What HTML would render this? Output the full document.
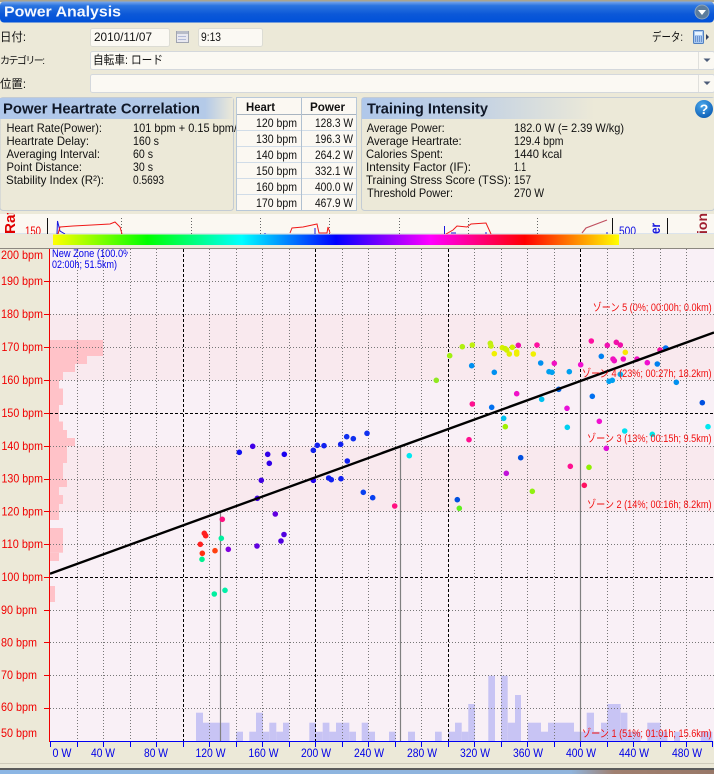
<!DOCTYPE html>
<html lang="ja">
<head>
<meta charset="utf-8">
<title>Power Analysis</title>
<style>
html,body{margin:0;padding:0;background:#ece9d8;width:714px;height:774px;overflow:hidden}
svg{display:block}
text{font-family:"Liberation Sans","Noto Sans CJK JP",sans-serif;font-size:12px;fill:#111}
.h{font-size:15px;font-weight:bold;fill:#101828}
.r text,.r{fill:#f00000}
.b text{fill:#0000e8}
.z text{fill:#f01010;font-size:11px}
.p circle{r:2.8px}
</style>
</head>
<body>
<svg xmlns="http://www.w3.org/2000/svg" width="714" height="774" viewBox="0 0 714 774">
<defs>
<linearGradient id="tb" x1="0" y1="0" x2="0" y2="1"><stop offset="0" stop-color="#7aa8ec"/><stop offset=".2" stop-color="#2a74e0"/><stop offset=".6" stop-color="#0c58d8"/><stop offset="1" stop-color="#0050d8"/></linearGradient>
<linearGradient id="hl"><stop offset="0" stop-color="#b0c8ea"/><stop offset=".88" stop-color="#b4cae8"/><stop offset="1" stop-color="#ece9d8"/></linearGradient>
<linearGradient id="hr"><stop offset="0" stop-color="#b0c8ea"/><stop offset=".3" stop-color="#c0d0e4"/><stop offset=".66" stop-color="#ece9d8"/><stop offset="1" stop-color="#ece9d8"/></linearGradient>
<linearGradient id="cb"><stop offset="0" stop-color="#ffff00"/><stop offset=".1667" stop-color="#00ff00"/><stop offset=".3333" stop-color="#00ffff"/><stop offset=".5" stop-color="#0000ff"/><stop offset=".6667" stop-color="#ff00ff"/><stop offset=".8333" stop-color="#ff0000"/><stop offset="1" stop-color="#ffff00"/></linearGradient>
<linearGradient id="bt"><stop offset="0" stop-color="#8cb6e4"/><stop offset=".8" stop-color="#90b4dc"/><stop offset=".86" stop-color="#a08070"/><stop offset="1" stop-color="#987868"/></linearGradient>
<radialGradient id="hp" cx=".4" cy=".3" r=".8"><stop offset="0" stop-color="#4aa8ec"/><stop offset="1" stop-color="#0858b0"/></radialGradient>
<clipPath id="cl"><rect x="0" y="97" width="236" height="114"/></clipPath>
<clipPath id="cs"><rect x="0" y="213" width="714" height="21"/></clipPath>
<clipPath id="cz"><rect x="50" y="249" width="78" height="22"/></clipPath>
</defs>

<rect width="714" height="774" fill="#ece9d8"/>

<!-- title bar -->
<rect x="0" y="0" width="714" height="2" fill="#a8a490"/>
<rect x="0" y="1.5" width="714" height="21" rx="4" fill="url(#tb)"/>
<text x="4" y="16.5" textLength="117" lengthAdjust="spacingAndGlyphs" style="font-size:15px;font-weight:bold;fill:#f4f8ff">Power Analysis</text>
<circle cx="702" cy="12" r="7" fill="#5c7c9c" stroke="#8ca4bc" stroke-width="1"/>
<path d="M698 10h8l-4 5z" fill="#fff"/>

<!-- form -->
<text x="0" y="41" textLength="26" lengthAdjust="spacingAndGlyphs">日付:</text>
<text x="0" y="64" textLength="45" lengthAdjust="spacing" style="font-size:10px">カテゴリー:</text>
<text x="0" y="88" textLength="26" lengthAdjust="spacingAndGlyphs">位置:</text>
<rect x="90.5" y="28.5" width="79" height="18" rx="2" fill="#fbf9f3" stroke="#dcdcd4"/>
<text x="94" y="41" textLength="58" lengthAdjust="spacingAndGlyphs">2010/11/07</text>
<rect x="176.5" y="31.5" width="12" height="11" fill="#e8e8f0" stroke="#a0a4b0"/>
<rect x="177" y="31" width="11" height="3" fill="#b8bcc8"/>
<path d="M178.5 36.5h8M178.5 39.5h8" stroke="#7c8cc0" stroke-dasharray="1 1"/>
<rect x="198.5" y="28.5" width="64" height="18" rx="2" fill="#fbf9f3" stroke="#dcdcd4"/>
<text x="201" y="41" textLength="20" lengthAdjust="spacingAndGlyphs">9:13</text>
<text x="652" y="41" textLength="31" lengthAdjust="spacingAndGlyphs">データ:</text>
<rect x="693.5" y="30.5" width="10" height="13" rx="1" fill="#a8c8f0" stroke="#5080c0"/>
<rect x="695" y="32" width="7" height="3" fill="#e8f4ff"/>
<path d="M695 37h7M695 39h7M695 41h7" stroke="#3060b0" stroke-dasharray="1 1"/>
<path d="M706 34l3 3-3 3z" fill="#304060"/>
<rect x="90.5" y="51.5" width="624" height="18" rx="2" fill="#fbf9f3" stroke="#d4d8dc"/>
<rect x="90.5" y="74.5" width="624" height="18" rx="2" fill="#fbf9f3" stroke="#d4d8dc"/>
<text x="93" y="64" textLength="70" lengthAdjust="spacingAndGlyphs">自転車: ロード</text>
<path d="M698.5 52v17M698.5 75v17" stroke="#e0e0dc"/>
<path d="M703.5 58.5h7l-3.5 3.500z" fill="#4c5c78"/>
<path d="M703.5 81.5h7l-3.5 3.500z" fill="#4c5c78"/>

<!-- left panel -->
<rect x="0" y="97.5" width="233.5" height="113" rx="3" fill="#ece9d8" stroke="#c4ccd4"/>
<rect x="0" y="98" width="233" height="21" fill="url(#hl)"/>
<text class="h" x="3" y="113.500" textLength="197" lengthAdjust="spacingAndGlyphs">Power Heartrate Correlation</text>
<g clip-path="url(#cl)">
<text x="6.5" y="132" textLength="95.5" lengthAdjust="spacingAndGlyphs">Heart Rate(Power):</text>
<text x="133" y="132" textLength="104" lengthAdjust="spacingAndGlyphs">101 bpm + 0.15 bpm/</text>
</g>
<text x="6.5" y="145" textLength="82.5" lengthAdjust="spacingAndGlyphs">Heartrate Delay:</text>
<text x="133" y="145" textLength="26" lengthAdjust="spacingAndGlyphs">160 s</text>
<text x="6.5" y="158" textLength="93.5" lengthAdjust="spacingAndGlyphs">Averaging Interval:</text>
<text x="133" y="158" textLength="20" lengthAdjust="spacingAndGlyphs">60 s</text>
<text x="6.5" y="171" textLength="75.5" lengthAdjust="spacingAndGlyphs">Point Distance:</text>
<text x="133" y="171" textLength="20" lengthAdjust="spacingAndGlyphs">30 s</text>
<text x="6" y="184" textLength="98" lengthAdjust="spacingAndGlyphs">Stability Index (R²):</text>
<text x="133" y="184" textLength="31" lengthAdjust="spacingAndGlyphs">0.5693</text>

<!-- table -->
<rect x="236.5" y="97.5" width="120" height="113" fill="#fbf8f2" stroke="#b8c8d8"/>
<path d="M237 130.500h119M237 146.500h119M237 162.500h119M237 178.500h119M237 194.500h119" stroke="#d0dce8"/>
<path d="M237 114.500h119" stroke="#a8b4c0"/>
<path d="M301.5 98v112" stroke="#b0c0d0"/>
<text x="246" y="111" textLength="29" lengthAdjust="spacingAndGlyphs" style="font-weight:bold">Heart</text>
<text x="310" y="111" textLength="35" lengthAdjust="spacingAndGlyphs" style="font-weight:bold">Power</text>
<text x="256" y="127" textLength="41" lengthAdjust="spacingAndGlyphs">120 bpm</text><text x="315" y="127" textLength="38" lengthAdjust="spacingAndGlyphs">128.3 W</text>
<text x="256" y="143" textLength="41" lengthAdjust="spacingAndGlyphs">130 bpm</text><text x="315" y="143" textLength="38" lengthAdjust="spacingAndGlyphs">196.3 W</text>
<text x="256" y="159" textLength="41" lengthAdjust="spacingAndGlyphs">140 bpm</text><text x="315" y="159" textLength="38" lengthAdjust="spacingAndGlyphs">264.2 W</text>
<text x="256" y="175" textLength="41" lengthAdjust="spacingAndGlyphs">150 bpm</text><text x="315" y="175" textLength="38" lengthAdjust="spacingAndGlyphs">332.1 W</text>
<text x="256" y="191" textLength="41" lengthAdjust="spacingAndGlyphs">160 bpm</text><text x="315" y="191" textLength="38" lengthAdjust="spacingAndGlyphs">400.0 W</text>
<text x="256" y="207" textLength="41" lengthAdjust="spacingAndGlyphs">170 bpm</text><text x="315" y="207" textLength="38" lengthAdjust="spacingAndGlyphs">467.9 W</text>

<!-- right panel -->
<rect x="361.5" y="97.5" width="353" height="113" rx="3" fill="#ece9d8" stroke="#c4ccd4"/>
<rect x="362" y="98" width="352" height="21" fill="url(#hr)"/>
<text class="h" x="367" y="113.500" textLength="121" lengthAdjust="spacingAndGlyphs">Training Intensity</text>
<circle cx="704" cy="109" r="9" fill="url(#hp)"/>
<text x="704" y="114" text-anchor="middle" style="font-size:14px;font-weight:bold;fill:#fff">?</text>
<text x="366.7" y="132" textLength="78" lengthAdjust="spacingAndGlyphs">Average Power:</text>
<text x="514" y="132" textLength="110" lengthAdjust="spacingAndGlyphs">182.0 W (= 2.39 W/kg)</text>
<text x="366.7" y="145" textLength="95" lengthAdjust="spacingAndGlyphs">Average Heartrate:</text>
<text x="514" y="145" textLength="49.5" lengthAdjust="spacingAndGlyphs">129.4 bpm</text>
<text x="366" y="158" textLength="77" lengthAdjust="spacingAndGlyphs">Calories Spent:</text>
<text x="514" y="158" textLength="48" lengthAdjust="spacingAndGlyphs">1440 kcal</text>
<text x="366" y="171" textLength="105" lengthAdjust="spacingAndGlyphs">Intensity Factor (IF):</text>
<text x="514" y="171" textLength="12" lengthAdjust="spacingAndGlyphs">1.1</text>
<text x="366" y="184" textLength="145" lengthAdjust="spacingAndGlyphs">Training Stress Score (TSS):</text>
<text x="514" y="184" textLength="17" lengthAdjust="spacingAndGlyphs">157</text>
<text x="367" y="197" textLength="86" lengthAdjust="spacingAndGlyphs">Threshold Power:</text>
<text x="514" y="197" textLength="30" lengthAdjust="spacingAndGlyphs">270 W</text>

<!-- mini chart strip -->
<rect x="0" y="214" width="714" height="19.5" fill="#fbf8f2"/>
<path d="M0 233.500h714" stroke="#dce4ec"/>
<g clip-path="url(#cs)">
<path d="M121.5 218v16M191.5 218v16M260.5 218v16M329.5 218v16M399.5 218v16M468.5 218v16M537.5 218v16" stroke="#666" stroke-dasharray="1 2"/>
<path d="M47.5 218v16M612.5 218v16M667.5 218v16" stroke="#111"/>
<path d="M57 234L57.5 221L60 231L65 234M265 233v2M315 228v6M444.5 226v8M451 233h5M485 233h2M607 232v2" fill="none" stroke="#1818e0"/>
<path d="M58 234L60 227L73 226L92 225L110 224L115 222L120 227L122 234M290 233L292 228L303 227L317 224L319 233L327 233L328 227L330 233M446 234L453 230L457 226L467 227L471 224L486 223L491 234" fill="none" stroke="#f01818"/>
<path d="M582 233L586 228L607 220" fill="none" stroke="#c05060" stroke-width="1.2"/>
<text transform="translate(15 234) rotate(-90)" textLength="33" lengthAdjust="spacingAndGlyphs" style="font-size:15px;font-weight:bold;fill:#e00000">Rate</text>
<text x="25" y="235" textLength="16" lengthAdjust="spacingAndGlyphs" style="fill:#f00000">150</text>
<text x="619" y="235" textLength="17" lengthAdjust="spacingAndGlyphs" style="fill:#1010e0">500</text>
<text transform="translate(660 234) rotate(-90)" textLength="11" lengthAdjust="spacingAndGlyphs" style="font-size:14px;font-weight:bold;fill:#1818e0">er</text>
<text transform="translate(707 234) rotate(-90)" textLength="21" lengthAdjust="spacingAndGlyphs" style="font-size:14px;font-weight:bold;fill:#a02030">ion</text>
</g>
<rect x="53" y="234.5" width="566" height="10.5" fill="url(#cb)"/>

<!-- plot background -->
<rect x="50" y="249" width="664" height="492" fill="#f9f0f6"/>
<rect x="50" y="314" width="664" height="66" fill="#f9e9ee"/>
<rect x="50" y="446" width="664" height="65.5" fill="#f9e9ee"/>
<path d="M0 248.500h714" stroke="#8c8880"/>

<!-- left histogram -->
<g fill="#ffc2c8">
<rect x="50" y="340" width="53" height="16"/>
<rect x="50" y="356" width="37" height="8"/>
<rect x="50" y="364" width="25" height="8"/>
<rect x="50" y="372" width="13" height="8"/>
<rect x="50" y="380" width="9" height="8.5"/>
<rect x="50" y="388.5" width="13" height="16.5"/>
<rect x="50" y="405" width="9" height="16.5"/>
<rect x="50" y="421.5" width="13" height="8.5"/>
<rect x="50" y="430" width="17" height="8"/>
<rect x="50" y="438" width="25" height="8"/>
<rect x="50" y="446" width="17" height="17"/>
<rect x="50" y="463" width="13" height="16"/>
<rect x="50" y="479" width="17" height="8"/>
<rect x="50" y="487" width="9" height="8"/>
<rect x="50" y="495" width="13" height="9"/>
<rect x="50" y="504" width="9" height="16"/>
<rect x="50" y="528" width="13" height="24.7"/>
<rect x="50" y="552.7" width="9" height="8.3"/>
<rect x="50" y="586" width="5" height="16"/>
</g>

<!-- bottom histogram -->
<g fill="#c8c4f4">
<rect x="196" y="712.7" width="7" height="28.3"/>
<rect x="203" y="722.7" width="26.5" height="18.3"/>
<rect x="236" y="731.7" width="7" height="9.3"/>
<rect x="249.3" y="731.7" width="6.7" height="9.3"/>
<rect x="256" y="712.7" width="7" height="28.3"/>
<rect x="263" y="731.7" width="6.3" height="9.3"/>
<rect x="269.3" y="722.7" width="7" height="18.3"/>
<rect x="276.3" y="731.7" width="6.7" height="9.3"/>
<rect x="283" y="722.7" width="6.3" height="18.3"/>
<rect x="309.3" y="722.7" width="6.7" height="18.3"/>
<rect x="316" y="731.7" width="6.7" height="9.3"/>
<rect x="322.7" y="722.7" width="6.7" height="18.3"/>
<rect x="329.3" y="731.7" width="6.7" height="9.3"/>
<rect x="336" y="722.7" width="13.3" height="18.3"/>
<rect x="349.3" y="731.7" width="6.7" height="9.3"/>
<rect x="361.7" y="722.7" width="6.7" height="18.3"/>
<rect x="368.3" y="731.7" width="6.7" height="9.3"/>
<rect x="389" y="731.7" width="6.7" height="9.3"/>
<rect x="408" y="731.7" width="7" height="9.3"/>
<rect x="435" y="731.7" width="6.7" height="9.3"/>
<rect x="448.3" y="731.7" width="6.7" height="9.3"/>
<rect x="455" y="722.7" width="6.7" height="18.3"/>
<rect x="461.7" y="731.7" width="6.7" height="9.3"/>
<rect x="468.3" y="704" width="6.7" height="37"/>
<rect x="488.3" y="675.7" width="6.7" height="65.3"/>
<rect x="501" y="675.7" width="6.7" height="65.3"/>
<rect x="507.7" y="722.7" width="7.3" height="18.3"/>
<rect x="515" y="695" width="6" height="46"/>
<rect x="527.7" y="722.7" width="13.3" height="18.3"/>
<rect x="541" y="731.7" width="7" height="9.3"/>
<rect x="548" y="722.7" width="26" height="18.3"/>
<rect x="574" y="731.7" width="12.7" height="9.3"/>
<rect x="586.7" y="712.7" width="7.3" height="28.3"/>
<rect x="594" y="731.7" width="7" height="9.3"/>
<rect x="601" y="722.7" width="6.3" height="18.3"/>
<rect x="607.3" y="704" width="13.3" height="37"/>
<rect x="620.7" y="712.7" width="6.7" height="28.3"/>
<rect x="627.3" y="731.7" width="13.3" height="9.3"/>
<rect x="647.3" y="722.7" width="13.3" height="18.3"/>
<rect x="660.7" y="731.7" width="6.7" height="9.3"/>
<rect x="674" y="731.7" width="6" height="9.3"/>
<rect x="700.7" y="731.7" width="11.7" height="9.3"/>
</g>

<!-- grid -->
<path d="M50 281.500h664M50 314.500h664M50 347.500h664M50 380.500h664M50 446.500h664M50 479.500h664M50 511.500h664M50 544.500h664M50 610.500h664M50 642.500h664M50 675.500h664M50 708.500h664" stroke="#777" stroke-dasharray="1 2"/>
<path d="M77.500 249v492M103.500 249v492M130.500 249v492M156.500 249v492M209.500 249v492M236.500 249v492M262.500 249v492M289.500 249v492M342.500 249v492M368.500 249v492M395.500 249v492M421.500 249v492M474.500 249v492M501.500 249v492M527.500 249v492M554.500 249v492M607.500 249v492M633.500 249v492M660.500 249v492M686.500 249v492" stroke="#777" stroke-dasharray="1 2"/>
<path d="M183.500 249v492M315.500 249v492M448.500 249v492M580.500 249v492M50 413.500h664M50 577.500h664" stroke="#000" stroke-dasharray="3 2"/>
<path d="M220.500 512v229M400.500 447v294M580.500 381v360" stroke="#808080" stroke-width="1.2"/>

<!-- points -->
<g class="p">
<circle cx="436.3" cy="380.3" r="2.8" fill="#90e820"/>
<circle cx="449.7" cy="355.7" r="2.8" fill="#a0f010"/>
<circle cx="462.3" cy="346.7" r="2.8" fill="#b0f010"/>
<circle cx="472.3" cy="345" r="2.8" fill="#c0f010"/>
<circle cx="490.3" cy="343.3" r="2.8" fill="#c0f010"/>
<circle cx="491" cy="346" r="2.8" fill="#c8f010"/>
<circle cx="494.3" cy="353.7" r="2.8" fill="#f0f000"/>
<circle cx="502.3" cy="347.7" r="2.8" fill="#d8f000"/>
<circle cx="505.3" cy="348.7" r="2.8" fill="#c8f000"/>
<circle cx="506.7" cy="350" r="2.8" fill="#d0f000"/>
<circle cx="509.3" cy="354" r="2.8" fill="#e0f000"/>
<circle cx="512.3" cy="347.3" r="2.8" fill="#d0f000"/>
<circle cx="516.7" cy="352" r="2.8" fill="#f0f000"/>
<circle cx="516.7" cy="354" r="2.8" fill="#f0f000"/>
<circle cx="518.3" cy="345.3" r="2.8" fill="#f010a8"/>
<circle cx="533.3" cy="354" r="2.8" fill="#f0f000"/>
<circle cx="537" cy="345" r="2.8" fill="#ff10a0"/>
<circle cx="471.7" cy="365.7" r="2.8" fill="#0090f0"/>
<circle cx="494.3" cy="372.3" r="2.8" fill="#0090f0"/>
<circle cx="540.7" cy="363" r="2.8" fill="#0090f0"/>
<circle cx="549" cy="371.7" r="2.8" fill="#00a0f0"/>
<circle cx="552" cy="372.3" r="2.8" fill="#00a0f0"/>
<circle cx="569.3" cy="371.7" r="2.8" fill="#00a0f0"/>
<circle cx="554.3" cy="363.3" r="2.8" fill="#f010c0"/>
<circle cx="580.7" cy="364.7" r="2.8" fill="#f010d0"/>
<circle cx="591.3" cy="341" r="2.8" fill="#ff10a0"/>
<circle cx="607.3" cy="345.3" r="2.8" fill="#f010b0"/>
<circle cx="616.3" cy="342.3" r="2.8" fill="#f010a8"/>
<circle cx="620.3" cy="345" r="2.8" fill="#f010a8"/>
<circle cx="625.3" cy="352.3" r="2.8" fill="#f8e800"/>
<circle cx="601.3" cy="356.3" r="2.8" fill="#0080f0"/>
<circle cx="613" cy="359" r="2.8" fill="#f010c0"/>
<circle cx="614.3" cy="360.7" r="2.8" fill="#f010c0"/>
<circle cx="623.3" cy="359" r="2.8" fill="#f010c0"/>
<circle cx="637" cy="359" r="2.8" fill="#f010c0"/>
<circle cx="647.3" cy="362.7" r="2.8" fill="#f010d0"/>
<circle cx="657.3" cy="364" r="2.8" fill="#0080f0"/>
<circle cx="660" cy="350" r="2.8" fill="#f010a0"/>
<circle cx="665.7" cy="348" r="2.8" fill="#0070f0"/>
<circle cx="620.3" cy="374.3" r="2.8" fill="#00b0f0"/>
<circle cx="609" cy="381.3" r="2.8" fill="#00a0f0"/>
<circle cx="612.3" cy="380.3" r="2.8" fill="#00a0f0"/>
<circle cx="676.3" cy="382.3" r="2.8" fill="#0090f0"/>
<circle cx="592.3" cy="396.3" r="2.8" fill="#0070f0"/>
<circle cx="702.3" cy="402.7" r="2.8" fill="#0050e0"/>
<circle cx="516.7" cy="393.7" r="2.8" fill="#f010c8"/>
<circle cx="472.3" cy="404" r="2.8" fill="#ff1090"/>
<circle cx="491.7" cy="407.3" r="2.8" fill="#0070f0"/>
<circle cx="541.7" cy="399.3" r="2.8" fill="#00c0f0"/>
<circle cx="558.7" cy="389.3" r="2.8" fill="#0060e0"/>
<circle cx="567" cy="408.3" r="2.8" fill="#e810d8"/>
<circle cx="503.7" cy="418.3" r="2.8" fill="#00c0f0"/>
<circle cx="505.3" cy="426.7" r="2.8" fill="#a0f000"/>
<circle cx="567.3" cy="427.3" r="2.8" fill="#00d0f0"/>
<circle cx="599.3" cy="421.3" r="2.8" fill="#f010d0"/>
<circle cx="624.7" cy="431" r="2.8" fill="#00e0f0"/>
<circle cx="652.3" cy="434.3" r="2.8" fill="#00e8e8"/>
<circle cx="708" cy="426.7" r="2.8" fill="#00e8f0"/>
<circle cx="469" cy="439.7" r="2.8" fill="#ff1090"/>
<circle cx="606.3" cy="448.3" r="2.8" fill="#e010d8"/>
<circle cx="520.7" cy="457.7" r="2.8" fill="#0050e0"/>
<circle cx="506.3" cy="473.3" r="2.8" fill="#c010d8"/>
<circle cx="570.3" cy="466.3" r="2.8" fill="#ff1090"/>
<circle cx="589" cy="467.3" r="2.8" fill="#90f000"/>
<circle cx="584.3" cy="485.3" r="2.8" fill="#ff1060"/>
<circle cx="532.3" cy="491.3" r="2.8" fill="#90f010"/>
<circle cx="457.3" cy="499.7" r="2.8" fill="#0050e0"/>
<circle cx="459.3" cy="508.3" r="2.8" fill="#60f020"/>
<circle cx="239.3" cy="452.3" r="2.8" fill="#1010f0"/>
<circle cx="252.7" cy="446.3" r="2.8" fill="#4000e8"/>
<circle cx="267.7" cy="454.3" r="2.8" fill="#3000e8"/>
<circle cx="284.3" cy="454.3" r="2.8" fill="#1800f0"/>
<circle cx="269.3" cy="463.3" r="2.8" fill="#3000e8"/>
<circle cx="261.3" cy="480.3" r="2.8" fill="#4000e0"/>
<circle cx="257.3" cy="498.3" r="2.8" fill="#4000e0"/>
<circle cx="275.3" cy="514" r="2.8" fill="#6000e0"/>
<circle cx="313.3" cy="480.3" r="2.8" fill="#2000f0"/>
<circle cx="313.3" cy="450.3" r="2.8" fill="#1020f0"/>
<circle cx="317.3" cy="445.3" r="2.8" fill="#1020f0"/>
<circle cx="324" cy="445.7" r="2.8" fill="#1020f0"/>
<circle cx="340.7" cy="444.3" r="2.8" fill="#1020f0"/>
<circle cx="346.7" cy="436.7" r="2.8" fill="#1030f0"/>
<circle cx="353.3" cy="438.7" r="2.8" fill="#1030f0"/>
<circle cx="367" cy="433.3" r="2.8" fill="#1030f0"/>
<circle cx="347.3" cy="461" r="2.8" fill="#1020f0"/>
<circle cx="328.7" cy="478" r="2.8" fill="#1020f0"/>
<circle cx="331.3" cy="479.7" r="2.8" fill="#1020f0"/>
<circle cx="341" cy="478.7" r="2.8" fill="#1020f0"/>
<circle cx="363.3" cy="492.3" r="2.8" fill="#0840f0"/>
<circle cx="372.7" cy="497.7" r="2.8" fill="#0840f0"/>
<circle cx="394.7" cy="506" r="2.8" fill="#ff1080"/>
<circle cx="409.3" cy="455.7" r="2.8" fill="#00e8f0"/>
<circle cx="204.3" cy="533.3" r="2.8" fill="#ff2020"/>
<circle cx="205.7" cy="535.7" r="2.8" fill="#ff2020"/>
<circle cx="200.3" cy="544.3" r="2.8" fill="#ff2020"/>
<circle cx="202.3" cy="553.3" r="2.8" fill="#ff3010"/>
<circle cx="202" cy="559.3" r="2.8" fill="#00f090"/>
<circle cx="215" cy="550.7" r="2.8" fill="#ff4010"/>
<circle cx="221.3" cy="538.3" r="2.8" fill="#00f0a0"/>
<circle cx="228.3" cy="549.3" r="2.8" fill="#8000e0"/>
<circle cx="222.3" cy="519.3" r="2.8" fill="#ff1080"/>
<circle cx="214.3" cy="594" r="2.8" fill="#00f0a0"/>
<circle cx="225" cy="590.3" r="2.8" fill="#00f0a8"/>
<circle cx="257" cy="546" r="2.8" fill="#6000e0"/>
<circle cx="281" cy="541" r="2.8" fill="#5000e0"/>
<circle cx="284" cy="534.5" r="2.8" fill="#5000e0"/>
</g>

<!-- regression line -->
<path d="M50 573.700L714 332.500" stroke="#000" stroke-width="2.4"/>

<!-- axes -->
<path d="M49.5 249v493" stroke="#f00000"/>
<path d="M44 281.500h6M44 314.500h6M44 347.500h6M44 380.500h6M44 413.500h6M44 446.500h6M44 479.500h6M44 511.500h6M44 544.500h6M44 577.500h6M44 610.500h6M44 642.500h6M44 675.500h6M44 708.500h6" stroke="#f00000"/>
<g class="r">
<text class="r" x="1" y="259" textLength="42" lengthAdjust="spacingAndGlyphs">200 bpm</text>
<text class="r" x="1" y="285" textLength="42" lengthAdjust="spacingAndGlyphs">190 bpm</text>
<text class="r" x="1" y="318" textLength="42" lengthAdjust="spacingAndGlyphs">180 bpm</text>
<text class="r" x="1.5" y="351" textLength="41.5" lengthAdjust="spacingAndGlyphs">170 bpm</text>
<text class="r" x="1.5" y="384" textLength="41.5" lengthAdjust="spacingAndGlyphs">160 bpm</text>
<text class="r" x="1.5" y="417" textLength="41.5" lengthAdjust="spacingAndGlyphs">150 bpm</text>
<text class="r" x="1.5" y="450" textLength="41.5" lengthAdjust="spacingAndGlyphs">140 bpm</text>
<text class="r" x="1.5" y="482.5" textLength="41.5" lengthAdjust="spacingAndGlyphs">130 bpm</text>
<text class="r" x="1.5" y="515.5" textLength="41.5" lengthAdjust="spacingAndGlyphs">120 bpm</text>
<text class="r" x="1.5" y="548" textLength="41.5" lengthAdjust="spacingAndGlyphs">110 bpm</text>
<text class="r" x="1.5" y="581" textLength="41.5" lengthAdjust="spacingAndGlyphs">100 bpm</text>
<text class="r" x="1" y="614" textLength="36" lengthAdjust="spacingAndGlyphs">90 bpm</text>
<text class="r" x="1" y="646.5" textLength="36" lengthAdjust="spacingAndGlyphs">80 bpm</text>
<text class="r" x="1" y="679" textLength="36" lengthAdjust="spacingAndGlyphs">70 bpm</text>
<text class="r" x="1" y="711" textLength="36" lengthAdjust="spacingAndGlyphs">60 bpm</text>
<text class="r" x="1" y="737" textLength="36" lengthAdjust="spacingAndGlyphs">50 bpm</text>
</g>
<path d="M50 741.500h663" stroke="#0000f0"/>
<path d="M50.500 741v6M77.500 741v6M103.500 741v6M130.500 741v6M156.500 741v6M183.500 741v6M209.500 741v6M236.500 741v6M262.500 741v6M289.500 741v6M315.500 741v6M342.500 741v6M368.500 741v6M395.500 741v6M421.500 741v6M448.500 741v6M474.500 741v6M501.500 741v6M527.500 741v6M554.500 741v6M580.500 741v6M607.500 741v6M633.500 741v6M660.500 741v6M686.500 741v6M712.500 741v6" stroke="#0000f0"/>
<g class="b">
<text x="52.5" y="757" textLength="19" lengthAdjust="spacingAndGlyphs">0 W</text>
<text x="91" y="757" textLength="24" lengthAdjust="spacingAndGlyphs">40 W</text>
<text x="144" y="757" textLength="24" lengthAdjust="spacingAndGlyphs">80 W</text>
<text x="195.5" y="757" textLength="30" lengthAdjust="spacingAndGlyphs">120 W</text>
<text x="248.5" y="757" textLength="30" lengthAdjust="spacingAndGlyphs">160 W</text>
<text x="301" y="757" textLength="30" lengthAdjust="spacingAndGlyphs">200 W</text>
<text x="354" y="757" textLength="30" lengthAdjust="spacingAndGlyphs">240 W</text>
<text x="407" y="757" textLength="30" lengthAdjust="spacingAndGlyphs">280 W</text>
<text x="460" y="757" textLength="30" lengthAdjust="spacingAndGlyphs">320 W</text>
<text x="513" y="757" textLength="30" lengthAdjust="spacingAndGlyphs">360 W</text>
<text x="566" y="757" textLength="30" lengthAdjust="spacingAndGlyphs">400 W</text>
<text x="619" y="757" textLength="30" lengthAdjust="spacingAndGlyphs">440 W</text>
<text x="672" y="757" textLength="30" lengthAdjust="spacingAndGlyphs">480 W</text>
</g>

<!-- zone labels -->
<g class="z">
<text x="592.7" y="311" textLength="119" lengthAdjust="spacingAndGlyphs">ゾーン 5 (0%; 00:00h;  0.0km)</text>
<text x="582" y="377" textLength="129.5" lengthAdjust="spacingAndGlyphs">ゾーン 4 (23%; 00:27h; 18.2km)</text>
<text x="587" y="442" textLength="124.5" lengthAdjust="spacingAndGlyphs">ゾーン 3 (13%; 00:15h;  9.5km)</text>
<text x="587" y="508" textLength="124.5" lengthAdjust="spacingAndGlyphs">ゾーン 2 (14%; 00:16h;  8.2km)</text>
<text x="582" y="737" textLength="129.5" lengthAdjust="spacingAndGlyphs">ゾーン 1 (51%; 01:01h; 15.6km)</text>
</g>
<g clip-path="url(#cz)">
<text x="52" y="257" textLength="82" lengthAdjust="spacingAndGlyphs" style="font-size:11px;fill:#0000e8">New Zone (100.0%;</text>
<text x="52" y="268" textLength="65" lengthAdjust="spacingAndGlyphs" style="font-size:11px;fill:#0000e8">02:00h; 51.5km)</text>
</g>

<!-- bottom chrome -->
<rect x="0" y="763" width="714" height="1" fill="#d0ccbc"/>
<rect x="0" y="768" width="714" height="2" fill="#5c5c5c"/>
<rect x="0" y="770" width="714" height="4" fill="url(#bt)"/>
</svg>
</body>
</html>
